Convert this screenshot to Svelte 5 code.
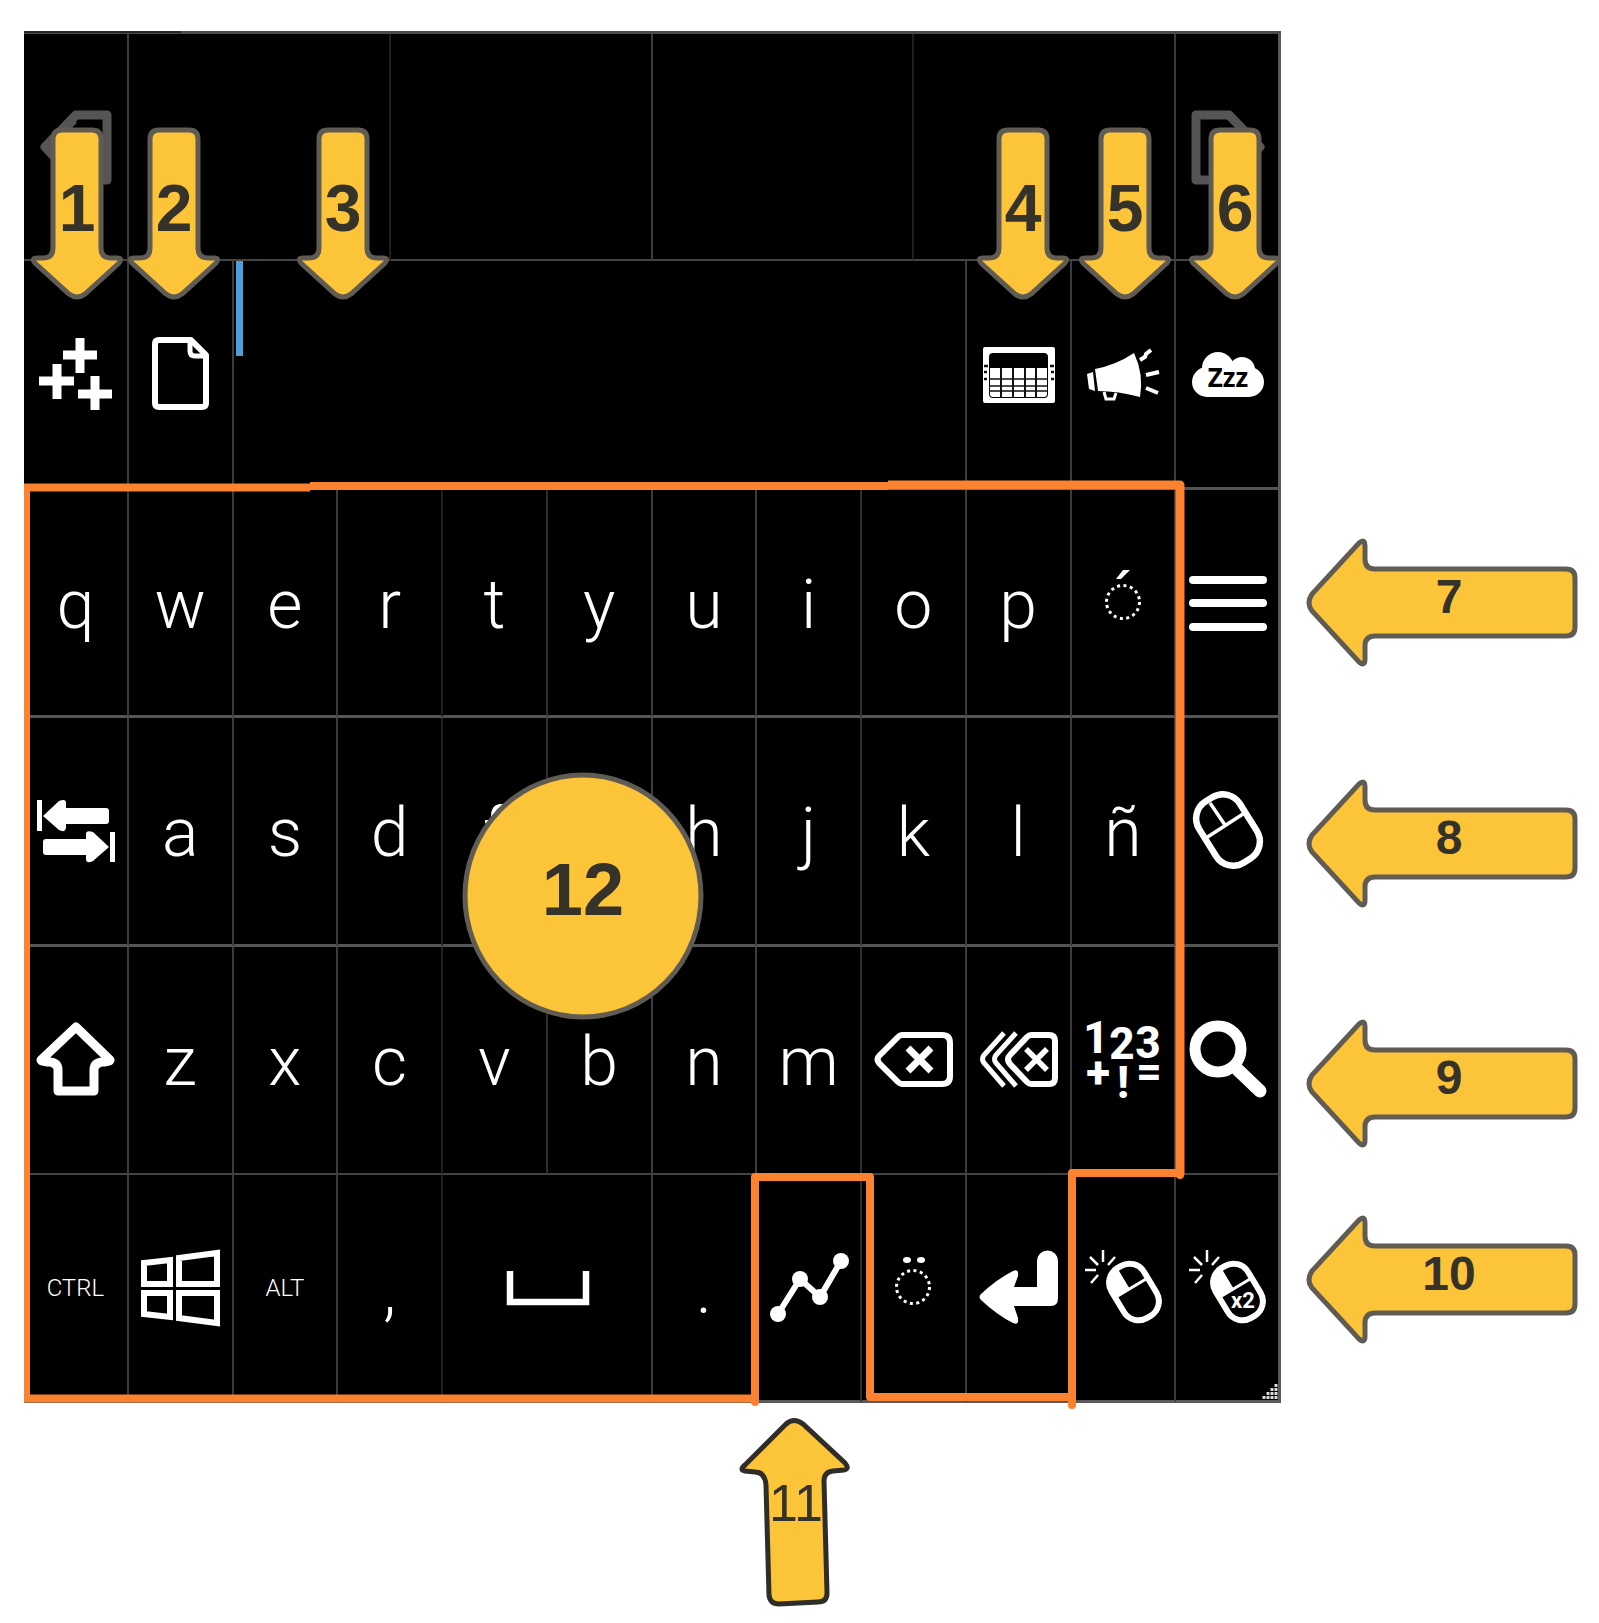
<script>
  // span counts half columns: the board is 24 half columns wide
  const rows = [
    [
      { icon: 'prev', label: 'Previous' },
      { span: 5, label: 'Suggestion 1', tone: 'faint' },
      { span: 5, label: 'Suggestion 2' },
      { span: 5, label: 'Suggestion 3', tone: 'faint' },
      { span: 5, label: 'Suggestion 4' },
      { icon: 'next', label: 'Next', tone: 'edge' }
    ],
    [
      { icon: 'plus', label: 'More' },
      { icon: 'page', label: 'New document' },
      { field: true, span: 14 },
      { icon: 'layout', label: 'Keyboard layout' },
      { icon: 'speak', label: 'Speak' },
      { icon: 'sleep', label: 'Sleep', tone: 'edge' }
    ],
    [
      { text: 'q' }, { text: 'w' }, { text: 'e' }, { text: 'r', tone: 'faint' }, { text: 't', tone: 'dim' },
      { text: 'y' }, { text: 'u' }, { text: 'i', tone: 'dim' }, { text: 'o' }, { text: 'p' },
      { icon: 'acute', label: 'Acute accent' },
      { icon: 'menu', label: 'Menu', tone: 'edge' }
    ],
    [
      { icon: 'tab', label: 'Tab' },
      { text: 'a' }, { text: 's' }, { text: 'd', tone: 'faint' }, { text: 'f', tone: 'dim' }, { text: 'g' },
      { text: 'h' }, { text: 'j', tone: 'dim' }, { text: 'k' }, { text: 'l' }, { text: 'ñ' },
      { icon: 'mouse', label: 'Mouse', tone: 'edge' }
    ],
    [
      { icon: 'shift', label: 'Shift' },
      { text: 'z' }, { text: 'x' }, { text: 'c', tone: 'faint' }, { text: 'v', tone: 'dim' }, { text: 'b' },
      { text: 'n' }, { text: 'm', tone: 'dim' },
      { icon: 'backspace', label: 'Backspace' },
      { icon: 'delword', label: 'Delete word' },
      { icon: 'symbols', label: 'Numbers and symbols' },
      { icon: 'search', label: 'Search', tone: 'edge' }
    ],
    [
      { text: 'CTRL', small: true },
      { icon: 'windows', label: 'Windows' },
      { text: 'ALT', small: true },
      { text: ',', tone: 'faint' },
      { icon: 'space', label: 'Space', span: 4 },
      { text: '.' },
      { icon: 'graph', label: 'Swipe', tone: 'dim' },
      { icon: 'umlaut', label: 'Dieresis' },
      { icon: 'enter', label: 'Enter' },
      { icon: 'click', label: 'Click' },
      { icon: 'dblclick', label: 'Double click', tone: 'edge' }
    ]
  ];

  // x is a centre on a 1599-unit wide canvas, y the top edge
  const downArrows = [
    { n: 1, x: 77, y: 126 },
    { n: 2, x: 174, y: 126 },
    { n: 3, x: 343, y: 126 },
    { n: 4, x: 1023, y: 126 },
    { n: 5, x: 1125, y: 126 },
    { n: 6, x: 1235, y: 126 }
  ];
  const leftArrows = [
    { n: 7, x: 1442, y: 538 },
    { n: 8, x: 1442, y: 779 },
    { n: 9, x: 1442, y: 1019 },
    { n: 10, x: 1442, y: 1215 }
  ];
  const place = (c) => `left:${(c.x / 1599) * 100}%;top:${c.y}px`;
</script>

{#snippet mouseBody()}
  <g transform="translate(52 46) rotate(-31)">
    <rect x="-19" y="-29" width="38" height="58" rx="17" class="line" stroke-width="6" />
    <path d="M-2 -29V-5H-19V-12A17 17 0 0 1 -2 -29Z" />
    <path d="M-19 -5H19" class="line" stroke-width="3" />
  </g>
  <path d="M21 4V16M8 11L16 19M3 24H14M9 37L16 29M26 19L33 11" class="line" stroke-width="2.5" />
{/snippet}

{#snippet picture(name)}
  <svg class="icon" viewBox="0 0 84 84" aria-hidden="true">
    {#if name === 'prev'}
      <path class="line muted" stroke-width="9" stroke-linejoin="round" d="M73 10H42L11 42L42 75H73Z" />
      <path class="line muted" stroke-width="8" d="M40 15L14 42" />
    {:else if name === 'next'}
      <path class="line muted" stroke-width="9" stroke-linejoin="round" d="M10 10H43L74 42L43 75H10Z" />
    {:else if name === 'plus'}
      <path class="line" stroke-width="9" d="M46 6V41M29 23H63M23 32V67M5 49H40M61 44V78M44 62H78" />
    {:else if name === 'page'}
      <path class="line" stroke-width="6" stroke-linejoin="round" d="M20 8H52L67 23V71Q67 75 63 75H20Q16 75 16 71V12Q16 8 20 8Z" />
      <path class="line" stroke-width="5" d="M51 8V19Q51 24 56 24H67" />
    {:else if name === 'layout'}
      <rect x="6" y="15" width="72" height="56" rx="2" />
      <rect x="12" y="21" width="59" height="45" rx="4" class="hole" />
      <path d="M13 36H70V62Q70 65 67 65H16Q13 65 13 62Z" />
      <path d="M24 36V66M36 36V66M48 36V66M59 36V66" class="ink" stroke-width="2" />
      <path d="M12 47H71M12 54H71M12 59H71" class="ink" stroke-width="1.5" />
      <path d="M7 34H11M7 40H10M7 47H10M73 34H77M74 40H77M74 47H77" class="ink" stroke-width="2.5" />
    {:else if name === 'speak'}
      <path d="M5 42L11 40L13 59L7 57Z" />
      <path d="M13 37Q34 33 52 21Q62 42 58 65Q36 59 16 59Z" />
      <path class="line" stroke-width="3" d="M22 60L24 67H32L34 61" />
      <path class="line" stroke-width="4" d="M58 28L63 25L64 22L69 18M64 43L77 40M64 56L76 61" />
    {:else if name === 'sleep'}
      <circle cx="32" cy="36" r="16" />
      <circle cx="56" cy="38" r="13" />
      <circle cx="21" cy="50" r="15" />
      <circle cx="63" cy="50" r="15" />
      <rect x="20" y="36" width="44" height="29" />
      <text class="zzz" x="42" y="55">Zzz</text>
    {:else if name === 'acute'}
      <circle cx="41" cy="41" r="16.5" class="line" stroke-width="3" stroke-dasharray="3 3.480" />
      <path d="M34 18L41 9H48L39 18Z" />
    {:else if name === 'umlaut'}
      <circle cx="41" cy="41" r="16.5" class="line" stroke-width="3" stroke-dasharray="3 3.480" />
      <ellipse cx="35" cy="14" rx="4" ry="3" />
      <ellipse cx="49" cy="14" rx="4" ry="3" />
    {:else if name === 'menu'}
      <path class="line" stroke-width="8" stroke-linecap="round" d="M7 19H77M7 42H77M7 66H77" />
    {:else if name === 'tab'}
      <path d="M3 11H8V42H3ZM76 43H81V73H76Z" />
      <path d="M9 27L25 12Q32 9 32 14V19H72Q75 19 75 22V32Q75 35 72 35H32V39Q31 44 25 41Z" />
      <path d="M75 58L59 43Q52 41 52 45V50H12Q9 50 9 53V63Q9 66 12 66H52V71Q53 75 59 72Z" />
    {:else if name === 'mouse'}
      <rect x="-24" y="-36" width="48" height="72" rx="20" class="line" stroke-width="6.5" transform="translate(42 41) rotate(-32)" />
      <path class="line" stroke-width="3.5" d="M20 49L57 25M24 14L39 36" />
    {:else if name === 'shift'}
      <path class="line" stroke-width="9" stroke-linejoin="round" d="M42 9L76 42Q76 44 68 44Q60 45 60 52V73H24V52Q24 45 16 44Q7 44 7 42Z" />
    {:else if name === 'backspace'}
      <path class="line" stroke-width="6" d="M30 17H70Q78 17 78 25V58Q78 66 70 66H30Q28 66 26 64L7 45Q4 41 7 38L26 19Q28 17 30 17Z" />
      <path class="line" stroke-width="7" d="M36 30L59 53M59 30L36 53" />
    {:else if name === 'delword'}
      <path class="line" stroke-width="6" d="M54 17H72Q78 17 78 23V60Q78 66 72 66H54Q52 66 50 64L33 46Q29 41 33 37L50 19Q52 17 54 17Z" />
      <path class="line" stroke-width="5" d="M27 15L7 37Q4 41 7 45L27 68M39 15L19 37Q16 41 19 45L39 68" />
      <path class="line" stroke-width="5.5" d="M49 31L70 52M70 31L49 52" />
    {:else if name === 'symbols'}
      <g class="sym">
        <text x="14" y="35">1</text>
        <text x="40" y="41">2</text>
        <text x="66" y="40">3</text>
        <text x="16" y="70">+</text>
        <text x="41" y="80">!</text>
        <text x="67" y="69">=</text>
      </g>
    {:else if name === 'search'}
      <circle cx="32" cy="31" r="23" class="line" stroke-width="11" />
      <path class="line" stroke-width="13" stroke-linecap="round" d="M52 52L74 73" />
    {:else if name === 'windows'}
      <path class="line" stroke-width="6" d="M5 17L31 14V38H5ZM40 12L78 7V38H40ZM5 47H31V71L5 68ZM40 47H78V77L40 72Z" />
    {:else if name === 'space'}
      <path class="line" stroke-width="6.5" d="M4 25V56H80V25" />
    {:else if name === 'graph'}
      <path class="line" stroke-width="6" d="M10 68L32 33L52 51L73 15" />
      <circle cx="10" cy="68" r="8" />
      <circle cx="32" cy="33" r="8" />
      <circle cx="52" cy="51" r="8" />
      <circle cx="73" cy="15" r="8" />
    {:else if name === 'enter'}
      <path d="M60 41H37L41 30Q42 22 36 25Q20 33 4 48Q1 51 4 54Q20 69 36 77Q42 80 41 72L37 60H74Q81 60 81 52V15A10 10 0 0 0 60 15Z" />
    {:else if name === 'click'}
      {@render mouseBody()}
    {:else if name === 'dblclick'}
      {@render mouseBody()}
      <text class="twice" x="57" y="62">x2</text>
    {/if}
  </svg>
{/snippet}

<main class="stage">
  <section class="board" aria-label="On-screen keyboard">
    {#each rows as row, r}
      {#each row as key}
        {#if key.field}
          <div class="cell entry row{r}">
            <span class="caret"></span>
            <input type="text" aria-label="Text" />
          </div>
        {:else}
          <button
            type="button"
            class="cell row{r} span{key.span ?? 2} {key.tone ?? ''}"
            class:letter={key.text && !key.small}
            class:small={key.small}
            aria-label={key.label ?? key.text}
          >
            {#if key.icon}{@render picture(key.icon)}{:else}{key.text ?? ''}{/if}
          </button>
        {/if}
      {/each}
    {/each}

    <svg class="outline" viewBox="0 0 1257 1372" preserveAspectRatio="none" aria-hidden="true">
      <path stroke-width="6" d="M3 453V1371" />
      <path stroke-width="8" d="M0 456.5H286" />
      <path stroke-width="8" d="M286 455H864" />
      <path stroke-width="9" stroke-linejoin="round" d="M864 454H1156V1144" />
      <path stroke-width="8" stroke-linecap="round" stroke-linejoin="round" d="M1156 1144V1142H1048V1374" />
      <path stroke-width="8" stroke-linecap="round" stroke-linejoin="round" d="M1048 1366H846V1146H731V1371" />
      <path stroke-width="8" d="M731 1367.5H0" />
    </svg>
    <svg class="grip" viewBox="0 0 16 16" aria-hidden="true">
      <path stroke-width="3" stroke-dasharray="3 1" d="M14 0V16M10 4V16M6 8V16M2 12V16" />
    </svg>
  </section>

  {#each downArrows as c}
    <svg class="callout down" style={place(c)} viewBox="0 0 92 174" role="img" aria-label="Callout {c.n}">
      <path d="M31 4H61Q70 4 70 13V122Q70 132 80 132H86Q92 132 88 137L54 168Q46 174 38 168L4 137Q0 132 6 132H12Q22 132 22 122V13Q22 4 31 4Z" />
      <text x="46" y="105">{c.n}</text>
    </svg>
  {/each}

  {#each leftArrows as c}
    <svg class="callout left" style={place(c)} viewBox="0 0 272 129" role="img" aria-label="Callout {c.n}">
      <path d="M260 31Q269 31 269 40V89Q269 98 260 98H69Q59 98 59 108V121Q59 129 53 124L6 73Q0 65 6 56L53 5Q59 0 59 8V21Q59 31 69 31Z" />
      <text x="143" y="75">{c.n}</text>
    </svg>
  {/each}

  <svg class="callout up" style={place({ x: 795, y: 1417 })} viewBox="0 0 112 190" role="img" aria-label="Callout 11">
    <path d="M47 7Q55 0 64 7L106 46Q111 52 105 53L94 54Q85 55 85 64L88 176Q88 185 79 185L40 187Q31 187 30 178L27 68Q26 55 16 55L6 54Q0 53 6 48Z" />
    <text x="57" y="104">11</text>
  </svg>

  <svg class="callout disc" style={place({ x: 583, y: 774 })} viewBox="0 0 242 246" role="img" aria-label="Callout 12">
    <ellipse cx="121" cy="122" rx="118" ry="121" />
    <text x="121" y="141">12</text>
  </svg>
</main>

<style>
  :global(body) {
    background: #fff;
  }

  .stage {
    position: relative;
    box-sizing: border-box;
    display: grid;
    grid-template-columns: minmax(0, 1257fr) minmax(0, 298fr);
    padding: 31px 20px 220px 24px;
    overflow: hidden;
  }

  .board {
    position: relative;
    display: grid;
    grid-template-columns: repeat(24, minmax(0, 1fr));
    grid-template-rows: 227px 229px 228px 229px 228px 228px;
    border-top: 3px solid #4c4c4c;
    background: #000;
  }
  .board::before {
    content: '';
    position: absolute;
    top: -3px;
    left: 0;
    width: 12.5%;
    height: 2px;
    background: #262626;
  }

  .cell {
    grid-column: span 2;
    box-sizing: border-box;
    display: flex;
    align-items: center;
    justify-content: center;
    margin: 0;
    padding: 0;
    min-width: 0;
    border: 0 solid #3c3c3c;
    border-right-width: 2px;
    border-bottom: 2px solid #444;
    background: #000;
    color: #fff;
    font: 300 24px/28px Roboto, 'Liberation Sans', sans-serif;
    cursor: pointer;
  }

  .letter {
    padding-top: 4px;
    font-size: 68px;
    font-weight: 350;
    line-height: 80px;
  }
  .small {
    font-weight: 350;
  }
  .span4 {
    grid-column: span 4;
  }
  .span5 {
    grid-column: span 5;
  }
  .row1,
  .row2,
  .row3 {
    border-bottom: 3px solid #555;
  }
  .row5 {
    border-bottom: 3px solid #5a5a5a;
  }
  .dim {
    border-right-color: #2e2e2e;
  }
  .faint {
    border-right-color: #1f1f1f;
  }
  .edge {
    border-right: 3px solid #5a5a5a;
  }

  .entry {
    grid-column: span 14;
    align-items: flex-start;
    justify-content: flex-start;
    padding-left: 2px;
  }
  .caret {
    flex: none;
    width: 7px;
    height: 95px;
    background: #4a9fdc;
  }
  input {
    flex: 1;
    min-width: 0;
    height: 95px;
    padding: 0 8px;
    border: 0;
    outline: 0;
    background: transparent;
    color: #fff;
    font: inherit;
    font-size: 68px;
  }

  .icon {
    flex: none;
    width: 84px;
    height: 84px;
    margin-left: 2px;
    fill: #fff;
    overflow: visible;
  }
  .line {
    fill: none;
    stroke: #fff;
  }
  .muted {
    stroke: #555;
  }
  .hole {
    fill: #000;
  }
  .ink {
    fill: none;
    stroke: #111;
  }
  .zzz {
    fill: #000;
    font: 700 26px 'Open Sans', sans-serif;
    text-anchor: middle;
  }
  .sym {
    font: 800 44px Roboto, sans-serif;
    text-anchor: middle;
  }
  .twice {
    font: 700 22px Roboto, sans-serif;
    text-anchor: middle;
  }

  .outline {
    position: absolute;
    top: -3px;
    left: 0;
    width: 100%;
    height: calc(100% + 3px);
    overflow: visible;
    fill: none;
    stroke: #fb822e;
    pointer-events: none;
  }
  .grip {
    position: absolute;
    right: 3px;
    bottom: 3px;
    width: 16px;
    height: 16px;
    fill: none;
    stroke: #ddd;
  }

  .callout {
    position: absolute;
    transform: translateX(-50%);
    overflow: visible;
    fill: #fcc438;
    stroke: #605c54;
    stroke-width: 5px;
  }
  .callout text {
    fill: #35322a;
    stroke: none;
    font-family: 'Liberation Sans', Arial, sans-serif;
    font-weight: 700;
    text-anchor: middle;
  }
  .down {
    width: 92px;
    height: 174px;
  }
  .down text {
    font-size: 66px;
  }
  .left {
    width: 272px;
    height: 129px;
  }
  .left text {
    font-size: 48px;
  }
  .up {
    width: 112px;
    height: 190px;
    stroke: #2f2d28;
  }
  .up text {
    font-size: 52px;
    font-weight: 400;
  }
  .disc {
    width: 242px;
    height: 246px;
  }
  .disc text {
    font-size: 74px;
  }
</style>
